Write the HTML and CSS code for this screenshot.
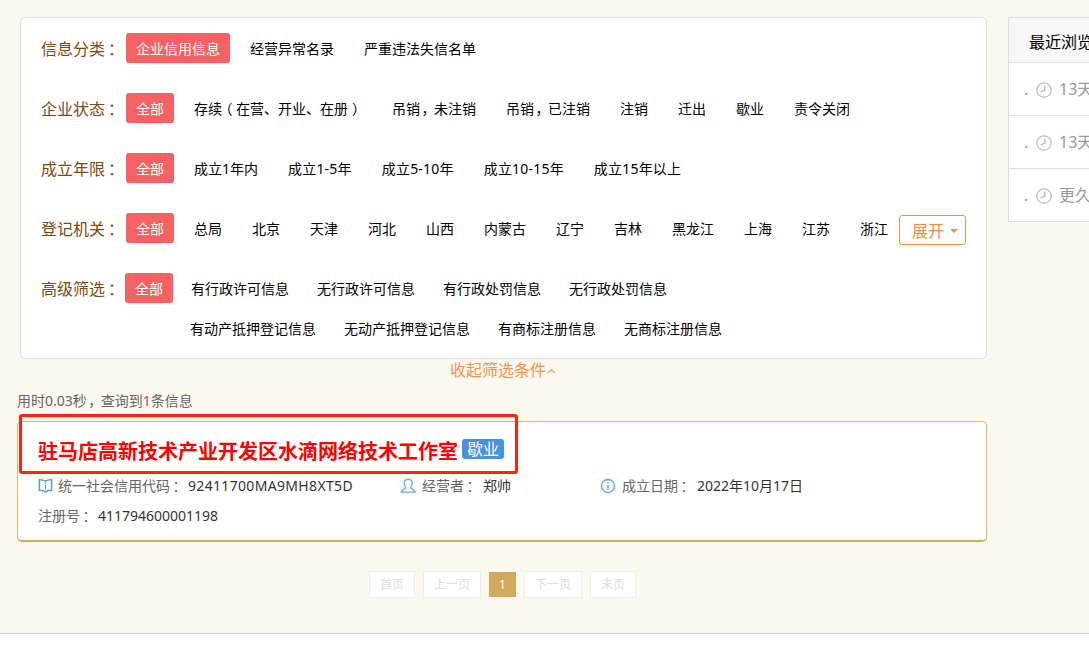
FILE: index.html
```html
<!DOCTYPE html>
<html lang="zh-CN">
<head>
<meta charset="utf-8">
<title>企业信用信息查询</title>
<link rel="stylesheet" href="styles.css">
</head>
<body>
<div class="page">
  <main class="main">
    <section class="filters">
      <div class="row"><span class="label">信息分类<i class="pn" lang="zh-TW">：</i></span><a class="opt on">企业信用信息</a><a class="opt">经营异常名录</a><a class="opt">严重违法失信名单</a></div>
      <div class="row"><span class="label">企业状态<i class="pn" lang="zh-TW">：</i></span><a class="opt on">全部</a><a class="opt">存续<i class="open">（</i>在营、开业、在册<i class="close">）</i></a><a class="opt">吊销<i class="comma">，</i>未注销</a><a class="opt">吊销<i class="comma">，</i>已注销</a><a class="opt">注销</a><a class="opt">迁出</a><a class="opt">歇业</a><a class="opt">责令关闭</a></div>
      <div class="row years"><span class="label">成立年限<i class="pn" lang="zh-TW">：</i></span><a class="opt on">全部</a><a class="opt">成立1年内</a><a class="opt">成立1-5年</a><a class="opt">成立5-10年</a><a class="opt">成立10-15年</a><a class="opt">成立15年以上</a></div>
      <div class="row"><span class="label">登记机关<i class="pn" lang="zh-TW">：</i></span><a class="opt on">全部</a><a class="opt">总局</a><a class="opt">北京</a><a class="opt">天津</a><a class="opt">河北</a><a class="opt">山西</a><a class="opt">内蒙古</a><a class="opt">辽宁</a><a class="opt">吉林</a><a class="opt">黑龙江</a><a class="opt">上海</a><a class="opt">江苏</a><a class="opt">浙江</a><a class="expand">展开<span class="caret"></span></a></div>
      <div class="row tight"><span class="label">高级筛选<i class="pn" lang="zh-TW">：</i></span><a class="opt on">全部</a><a class="opt">有行政许可信息</a><a class="opt">无行政许可信息</a><a class="opt">有行政处罚信息</a><a class="opt">无行政处罚信息</a></div>
      <div class="row tight second"><a class="opt">有动产抵押登记信息</a><a class="opt">无动产抵押登记信息</a><a class="opt">有商标注册信息</a><a class="opt">无商标注册信息</a></div>
    </section>
    <a class="toggle">收起筛选条件<span class="up">^</span></a>
    <p class="stats">用时0.03秒<i class="comma">，</i>查询到<em>1</em>条信息</p>
    <section class="card">
      <div class="mark"></div>
      <h1 class="title"><span class="name">驻马店高新技术产业开发区水滴网络技术工作室</span><span class="tag">歇业</span></h1>
      <div class="info">
        <div class="cell">
          <svg class="ico" viewBox="0 0 15 15"><rect width="15" height="15" fill="#fbf8f0"/><path d="M1.4 1.8 Q5 1.6 7.5 3.2 Q10 1.6 13.6 1.8 V12.4 L9.8 12.6 L7.5 14 L5.2 12.6 L1.4 12.4Z" fill="#fff" stroke="#5aa0da" stroke-width="1.5"/><path d="M7.5 4.6v1.3M7.5 7v4.6" stroke="#5aa0da" stroke-width="1.2"/></svg>
          <span class="key">统一社会信用代码<i class="pn" lang="zh-TW">：</i></span><span class="val code">92411700MA9MH8XT5D</span>
        </div>
        <div class="cell">
          <svg class="ico" viewBox="0 0 16 16"><rect width="16" height="16" fill="#fbf8f0"/><path d="M5.8 9.2 C2.8 6 3.9 1.3 8.3 1.3 S13.6 6 10.6 9.2 C10 10.7 14.6 11 15.2 14.2 H1.4 C2 11 6.4 10.7 5.8 9.2Z" fill="none" stroke="#6fabdf" stroke-width="1.3"/></svg>
          <span class="key">经营者<i class="pn" lang="zh-TW">：</i></span><span class="val">郑帅</span>
        </div>
        <div class="cell">
          <svg class="ico" viewBox="0 0 16 16"><rect width="16" height="16" fill="#fbf8f0"/><circle cx="8" cy="8" r="6.5" fill="none" stroke="#65a6db" stroke-width="1.3"/><path d="M8 4v1.6M8 6.8v5" stroke="#65a6db" stroke-width="1.4"/></svg>
          <span class="key">成立日期<i class="pn" lang="zh-TW">：</i></span><span class="val">2022年10月17日</span>
        </div>
      </div>
      <div class="info"><div class="cell"><span class="key">注册号<i class="pn" lang="zh-TW">：</i></span><span class="val">411794600001198</span></div></div>
    </section>
    <nav class="pager"><a>首页</a><a>上一页</a><a class="cur">1</a><a>下一页</a><a>末页</a></nav>
  </main>
  <aside class="recent">
    <h2>最近浏览</h2>
    <div class="item"><span class="dot">.</span><svg class="clock" viewBox="0 0 16 16"><circle cx="8" cy="8" r="7.2" fill="none" stroke="#b4c2bf" stroke-width="1.3"/><path d="M8.8 3.6V8.4H8L4.6 9.8" fill="none" stroke="#b4c2bf" stroke-width="1.4"/></svg><span>13天</span></div>
    <div class="item"><span class="dot">.</span><svg class="clock" viewBox="0 0 16 16"><circle cx="8" cy="8" r="7.2" fill="none" stroke="#b4c2bf" stroke-width="1.3"/><path d="M8.8 3.6V8.4H8L4.6 9.8" fill="none" stroke="#b4c2bf" stroke-width="1.4"/></svg><span>13天</span></div>
    <div class="item"><span class="dot">.</span><svg class="clock" viewBox="0 0 16 16"><circle cx="8" cy="8" r="7.2" fill="none" stroke="#b4c2bf" stroke-width="1.3"/><path d="M8.8 3.6V8.4H8L4.6 9.8" fill="none" stroke="#b4c2bf" stroke-width="1.4"/></svg><span>更久</span></div>
  </aside>
</div>
</body>
</html>
```
FILE: styles.css
```css
* { box-sizing: border-box; }
html, body { margin: 0; height: 652px; overflow: hidden; background: #fff; }
body { font: 14px/30px "Noto Sans", "Noto Sans CJK SC", sans-serif; color: #000; }
.pn { font-family: "Noto Sans CJK TC", sans-serif; font-style: normal; line-height: 1; margin: 0 1px 0 -1px; vertical-align: -1px; }
.comma, .open, .close { display: inline-block; width: 1em; font-style: normal; line-height: 1; }
.comma { text-indent: 0.1em; }
.close { text-indent: 0.28em; }
.open { text-indent: -0.25em; }
.page { height: 634px; padding: 17px 0 0 17px; display: flex; align-items: flex-start; gap: 21px; background: #fbf8f0; border-bottom: 1px solid #d5d5d5; overflow: hidden; white-space: nowrap; }
.main { width: 970px; flex: none; display: flex; flex-direction: column; }
.filters { margin-left: 3px; height: 342px; padding: 15px 0 0 20px; background: #fff; border: 1px solid #ddd; border-radius: 5px; }
.row { display: flex; gap: 10px; height: 30px; margin-bottom: 30px; }
.label { width: 80px; margin-right: -5px; font-size: 16px; line-height: 32px; color: #7f4a0c; }
.opt { padding: 0 10px; line-height: 31px; }
.on { background: #f66263; color: #fff; border-radius: 3px; }
.years .on ~ .opt + .opt { letter-spacing: 0.2px; }
.tight { gap: 8px; margin-bottom: 10px; }
.tight .label { margin-right: -4px; }
.second { padding-left: 139px; }
.expand { width: 67px; height: 30px; margin: 2px 0 0 -9px; padding: 2px 0 0 12px; display: flex; align-items: center; gap: 6px; font-size: 16px; line-height: 30px; color: #f08c46; border: 1px solid #ee914b; border-radius: 3px; }
.caret { border: 4px solid transparent; border-top-color: #ee914b; border-bottom: 0; }
.toggle { align-self: center; height: 22px; margin-left: 3px; line-height: 23px; font-size: 16px; color: #f0944d; }
.up { font-family: "DejaVu Sans", sans-serif; font-size: 13px; line-height: 1; vertical-align: -3px; }
.stats { margin: 9px 0 0; height: 22px; line-height: 22px; color: #666; }
.stats em { font-style: normal; color: #e0394a; }
.card { position: relative; margin-top: 9px; height: 121px; padding: 14px 20px 0; background: #fff; border: 1px solid #d6b966; border-bottom: 2px solid #d2ab5f; border-radius: 5px; }
.mark { position: absolute; left: 1px; top: -8px; width: 499px; height: 60px; border: 3px solid #ff2112; border-radius: 3px; }
.title { margin: 0; height: 35px; display: flex; gap: 4px; font-size: 20px; line-height: 32px; color: #f00; }
.tag { width: 42px; height: 20px; margin-top: 3px; background: #4393df; color: #fff; border-radius: 3px; font-size: 16px; font-weight: 400; line-height: 21px; text-align: center; }
.info { display: grid; grid-template-columns: 362px 200px auto; height: 30px; }
.cell { display: flex; }
.ico { width: 15px; height: 15px; margin: 7px 5px 0 0; }
.cell + .cell .ico { width: 16px; height: 16px; margin-right: 6px; }
.key { color: #666; }
.val { margin-left: 4px; color: #333; }
.cell + .cell .val { margin-left: 5px; }
.code { letter-spacing: 0.33px; }
.pager { align-self: center; margin: 29px 0 0 1px; display: flex; align-items: center; gap: 8px; font-size: 12px; line-height: 25px; color: #ddd; }
.pager a { padding: 0 10px; background: #fff; border: 1px solid #eee; }
.pager .cur { width: 27px; padding: 0; text-align: center; background: #d2aa5f; color: #fff; border: 0; }
.recent { width: 250px; flex: none; background: #fff; border: 1px solid #ddd; color: #999; font-size: 16px; }
.recent h2 { margin: 0; height: 44px; padding-left: 20px; background: #f7f7f7; color: #000; font-size: 16px; font-weight: 400; line-height: 48px; }
.item { height: 53px; padding-left: 15px; border-top: 1px solid #ddd; display: flex; line-height: 52px; }
.dot { width: 12px; }
.clock { width: 16px; height: 16px; margin: 19px 7px 0 0; }
```
